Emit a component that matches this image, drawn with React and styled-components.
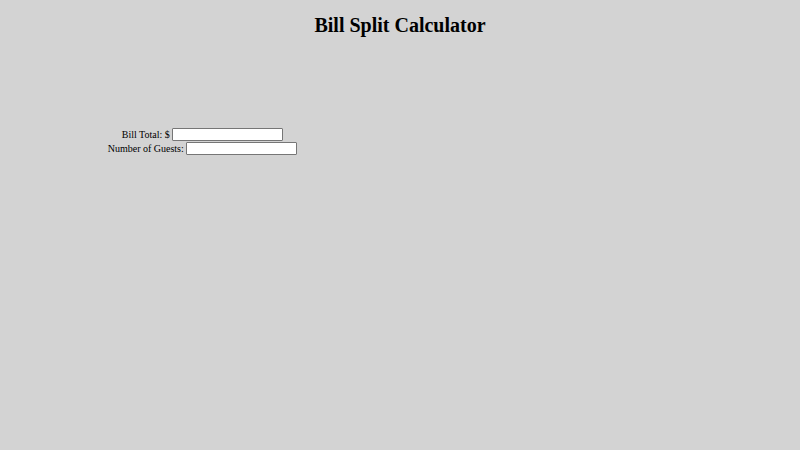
import React from 'react';
import styled, { createGlobalStyle } from 'styled-components';

const GlobalStyle = createGlobalStyle`
  html, body {
    background: #d3d3d3;
  }
  body {
    margin: 5px;
    font-family: "Liberation Serif", "Times New Roman", serif;
    color: #000;
  }
`

const Title = styled.h1`
  margin: 9px 0 13.4px;
  font-size: 20px;
  font-weight: bold;
  line-height: 23px;
  text-align: center;
`

const Form = styled.form`
  width: 50%;
  margin-top: 91px;
  display: flex;
  flex-direction: column;
  gap: 1px;
`

const Row = styled.label`
  display: flex;
  justify-content: center;
  align-items: center;
  gap: 2.5px;
  height: 13px;
  font-size: 10px;
`

const Input = styled.input`
  box-sizing: border-box;
  width: 111px;
  height: 13px;
  margin: 0;
  padding: 0 1px;
  border: 1px solid #767676;
  border-radius: 1px;
  background: #fff;
  font-size: 8px;
`

const App = () => (
  <>
    <GlobalStyle />
    <Title>Bill Split Calculator</Title>
    <Form onSubmit={e => e.preventDefault()}>
      <Row>
        Bill Total: $
        <Input type="text" />
      </Row>
      <Row>
        Number of Guests:
        <Input type="text" />
      </Row>
    </Form>
  </>
)

export default App;
